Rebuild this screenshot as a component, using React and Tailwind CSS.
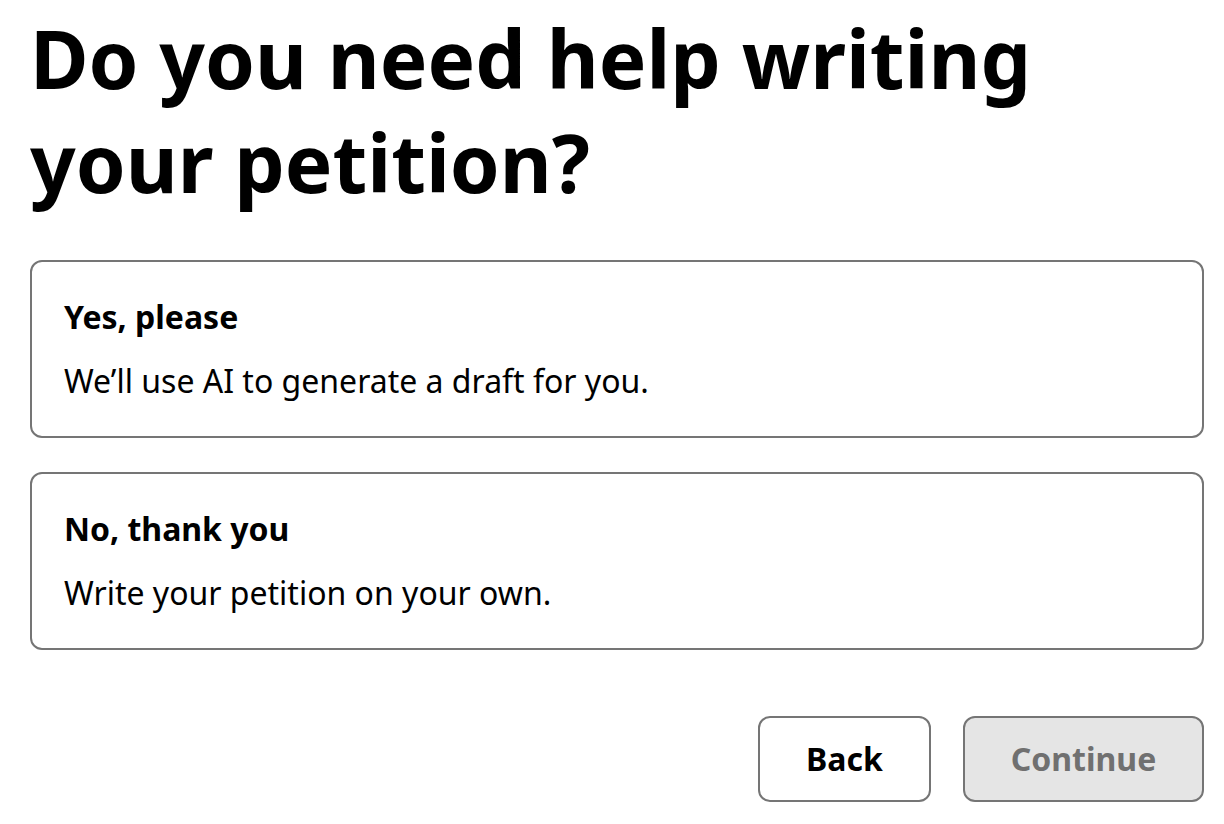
import React, { useState } from 'react';

const options = [
  { id: 'yes', title: 'Yes, please', body: 'We’ll use AI to generate a draft for you.' },
  { id: 'no', title: 'No, thank you', body: 'Write your petition on your own.' },
];

function App() {
  const [choice, setChoice] = useState(null);

  return (
    <div className="min-h-screen bg-white text-black font-['Noto_Sans',sans-serif]">
      <div className="pl-[30px] pr-[20px] pt-[6px]">
        <h1 className="text-[80px] font-bold leading-[104px]">
          Do you need help writing
          <br />
          your petition?
        </h1>

        {/* Options */}
        <div className="mt-[46px] flex flex-col gap-[34px]">
          {options.map((o) => (
            <button
              key={o.id}
              onClick={() => setChoice(o.id)}
              className={`flex h-[178px] w-full flex-col justify-center rounded-[12px] border-2 border-[#757575] px-[32px] text-left ${
                choice === o.id ? 'bg-gray-50' : 'bg-white'
              }`}
            >
              <div className="text-[32px] font-bold leading-[44px]">{o.title}</div>
              <div className="mt-[20px] text-[32px] leading-[44px]">{o.body}</div>
            </button>
          ))}
        </div>

        {/* Action Buttons */}
        <div className="mt-[66px] flex justify-end gap-[32px]">
          <button className="h-[86px] w-[173px] rounded-[12px] border-2 border-[#757575] bg-white text-[32px] font-bold">
            Back
          </button>
          <button
            disabled={!choice}
            className="h-[86px] w-[241px] rounded-[12px] border-2 border-[#757575] bg-[#e5e5e5] text-[32px] font-bold text-[#707070]"
          >
            Continue
          </button>
        </div>
      </div>
    </div>
  );
}

export default App;
